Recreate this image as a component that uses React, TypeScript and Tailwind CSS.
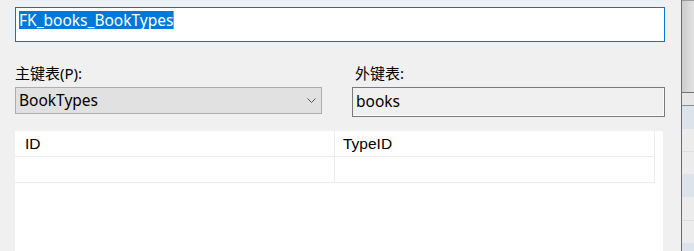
export default function App() {
  return (
    <div className="w-[694px] h-[251px] overflow-hidden bg-[#f0f0f0] flex text-black">
      <div className="w-[681px] flex flex-col pl-[15px] pt-[7px]">
        <div className="w-[650px] h-[35px] border border-[#0078d7] bg-white flex items-start pt-[3px] pl-[3px] font-['Noto_Sans',sans-serif] text-[15.5px] leading-[18px]">
          <span className="bg-[#0078d7] text-white">FK_books_BookTypes</span>
          <span className="w-px h-[18px] bg-[#ff8a1e]" />
        </div>

        <div className="flex mt-[21px] font-['Noto_Sans','Noto_Sans_CJK_SC',sans-serif] text-[15px] leading-[20px]">
          <div className="w-[307px]">主键表(P):</div>
          <div className="ml-[30px] pl-[3px]">外键表:</div>
        </div>

        <div className="flex items-start mt-[4px] font-['Noto_Sans',sans-serif] text-[15.5px]">
          <div className="w-[307px] h-[27px] bg-[#e1e1e1] border border-[#adadad] flex items-center pl-[3px] pr-[4px]">
            <span className="flex-1 leading-none">BookTypes</span>
            <svg width="9" height="6" viewBox="0 0 9 6" className="mr-[1px]">
              <polyline points="0.5,0.5 4.5,4.5 8.5,0.5" fill="none" stroke="#555" strokeWidth="1" />
            </svg>
          </div>
          <div className="ml-[30px] w-[313px] h-[30px] bg-[#f0f0f0] border border-[#7a7a7a] shadow-[inset_-1px_-1px_0_0_#fbfbfb] flex items-center pl-[3px]">
            <span className="leading-none">books</span>
          </div>
        </div>

        <div className="mt-[14px] w-[648px] flex-1 bg-white font-['Liberation_Sans',Arial,sans-serif] text-[15.5px]">
          <div className="w-[640px]">
            <div className="flex h-[26px] border-b border-[#ececec]">
              <div className="w-[320px] border-r border-[#ececec] pl-[10px] flex items-center">ID</div>
              <div className="flex-1 border-r border-[#ececec] pl-[8px] flex items-center">TypeID</div>
            </div>
            <div className="flex h-[26px] border-b border-[#ececec]">
              <div className="w-[320px] border-r border-[#ececec]" />
              <div className="flex-1 border-r border-[#ececec]" />
            </div>
          </div>
        </div>
      </div>

      <div className="w-px bg-[#6b6b6b]" />

      <div className="flex-1 flex flex-col shadow-[inset_3px_0_4px_-1px_rgba(0,0,0,0.12)]">
        <div className="h-px bg-[#9a9a9a]" />
        <div className="h-[91px] bg-gradient-to-r from-[#cdcdcd] to-[#e2e2e2]" />
        <div className="h-px bg-[#727272]" />
        <div className="h-[12px] bg-[#e6e6e6]" />
        <div className="h-px bg-[#8c8c8c]" />
        <div className="h-[23px] bg-[#dde3ea]" />
        <div className="h-[23px] bg-[#ececec] border-b border-[#dedede]" />
        <div className="h-[22px] bg-[#ececec]" />
        <div className="h-[23px] bg-[#dde3ea]" />
        <div className="h-[24px] bg-[#ececec] border-b border-[#dedede]" />
        <div className="h-[22px] bg-[#ececec]" />
        <div className="flex-1 bg-[#dde3ea]" />
      </div>
    </div>
  );
}
